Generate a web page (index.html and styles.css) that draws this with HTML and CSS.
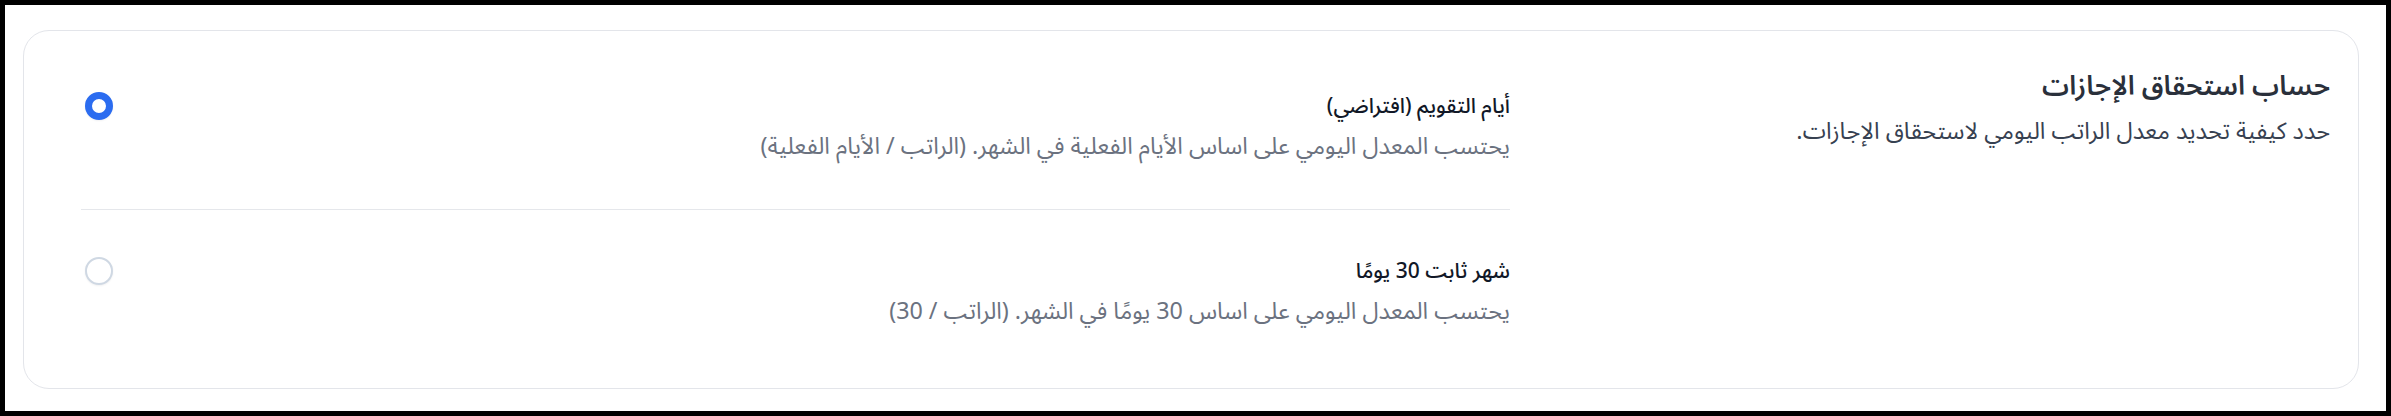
FILE: index.html
```html
<!DOCTYPE html>
<html lang="ar" dir="rtl">
<head>
<meta charset="utf-8">
<title>حساب استحقاق الإجازات</title>
<link rel="stylesheet" href="styles.css">
</head>
<body>
<div class="frame">
  <section class="card">
    <div class="intro">
      <h2 class="title">حساب استحقاق الإجازات</h2>
      <p class="subtitle">حدد كيفية تحديد معدل الراتب اليومي لاستحقاق الإجازات.</p>
    </div>
    <div class="options">
      <label class="option">
        <div class="option-text">
          <span class="option-title">أيام التقويم (افتراضي)</span>
          <span class="option-desc">يحتسب المعدل اليومي على اساس الأيام الفعلية في الشهر. (الراتب / الأيام الفعلية)</span>
        </div>
        <span class="radio radio-checked"></span>
      </label>
      <label class="option">
        <div class="option-text">
          <span class="option-title">شهر ثابت 30 يومًا</span>
          <span class="option-desc">يحتسب المعدل اليومي على اساس 30 يومًا في الشهر. (الراتب / 30)</span>
        </div>
        <span class="radio"></span>
      </label>
    </div>
  </section>
</div>
</body>
</html>
```
FILE: styles.css
```css
* { box-sizing: border-box; }
html { background: #000; }
body {
  margin: 0;
  font-family: "Noto Sans Arabic", "Noto Sans Arabic UI", "Noto Naskh Arabic", "Noto Sans", "DejaVu Sans", sans-serif;
}
.frame {
  margin: 5px;
  height: 406px;
  background: #fff;
  padding: 25px 27px 23px 18px;
}
.card {
  display: flex;
  gap: 40px;
  border: 1px solid #e3e5ea;
  border-radius: 26px;
  padding: 14px 28px 14px 57px;
  background: #fff;
}
.intro {
  flex: 0 0 780px;
  padding-top: 24px;
}
.title {
  margin: 0;
  font-size: 27px;
  line-height: 36px;
  font-weight: 600;
  color: #2a303b;
}
.subtitle {
  margin: 11px 0 0;
  font-size: 23.5px;
  line-height: 32px;
  color: #374151;
}
.options {
  flex: 1;
  display: flex;
  flex-direction: column;
}
.option {
  display: flex;
  justify-content: space-between;
  align-items: flex-start;
  padding: 47px 0 46px 4px;
  cursor: pointer;
}
.option + .option { border-top: 1px solid #e5e7eb; }
.option-text {
  display: flex;
  flex-direction: column;
  gap: 11px;
}
.option-title {
  font-size: 21px;
  line-height: 28px;
  font-weight: 500;
  color: #111827;
}
.option-desc {
  font-size: 23.3px;
  line-height: 32px;
  color: #6b7280;
}
.radio {
  flex: 0 0 28px;
  width: 28px;
  height: 28px;
  border-radius: 50%;
  border: 2.5px solid #cfd8e3;
  background: #fff;
  box-shadow: 0 1px 2px rgba(15, 23, 42, 0.06);
}
.radio-checked {
  border: 7px solid #2b6cf0;
}
```
